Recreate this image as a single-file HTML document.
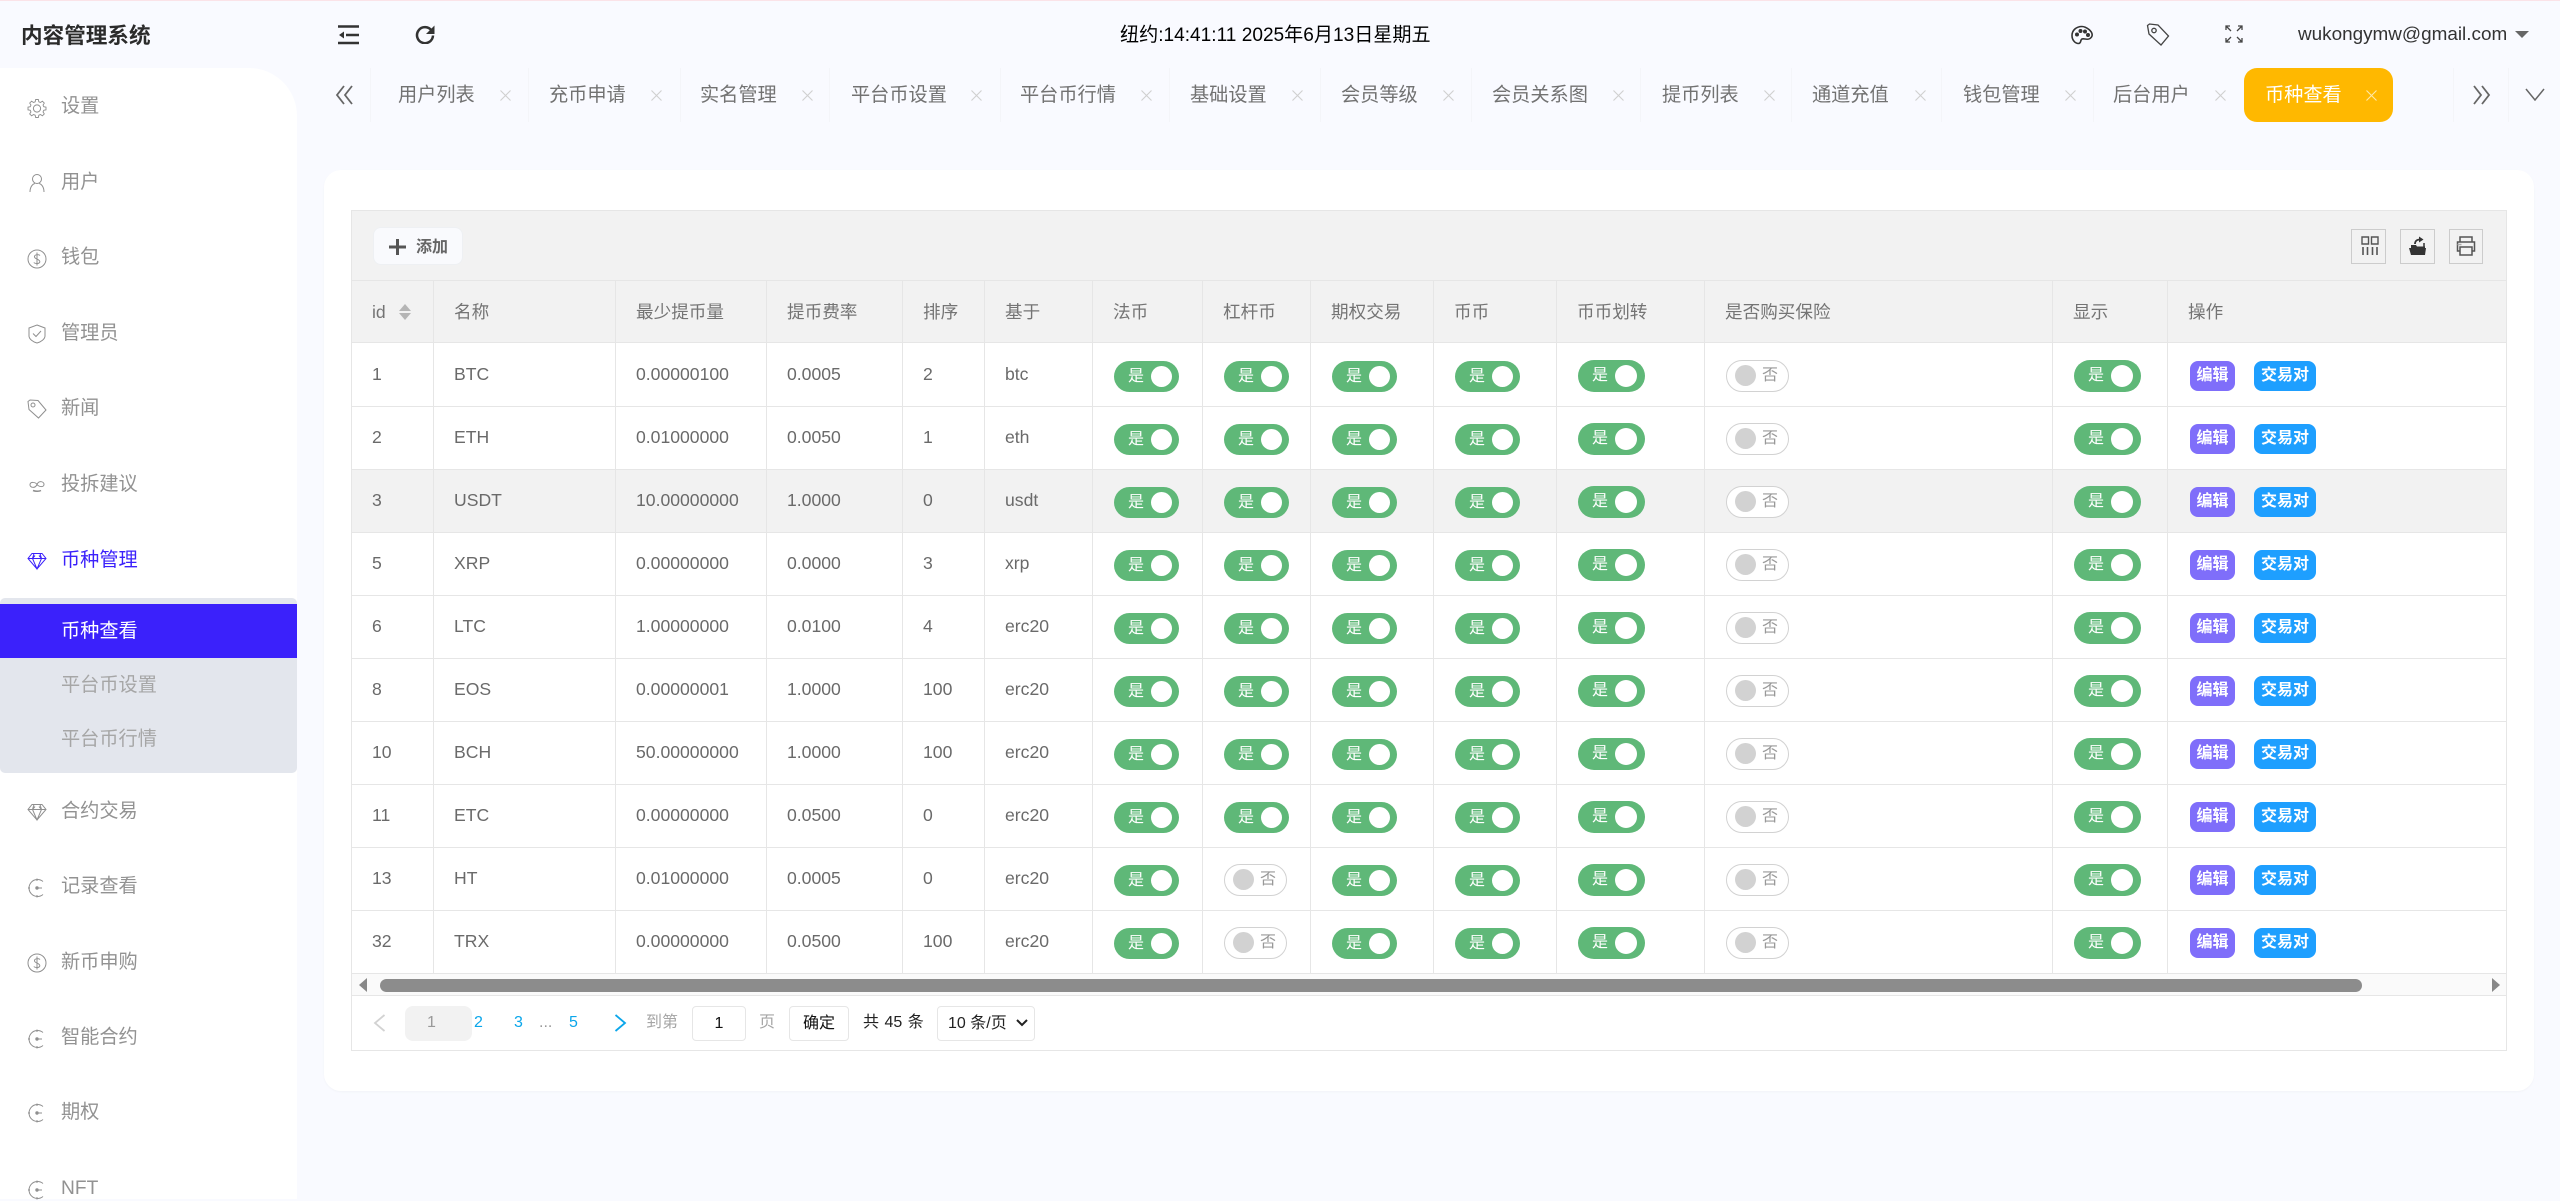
<!DOCTYPE html>
<html lang="zh">
<head>
<meta charset="utf-8">
<title>内容管理系统</title>
<style>
*{box-sizing:border-box}
html,body{margin:0;padding:0}
body{width:2560px;height:1199px;overflow:hidden;position:relative;background:#f9faff;font-family:"Liberation Sans","Noto Sans CJK SC",sans-serif;color:#666}
.a{position:absolute;white-space:nowrap}
.pink{left:0;top:0;width:2560px;height:1px;background:#fbe3e8}
.logo{left:21px;top:22px;font-size:21.6px;line-height:28px;font-weight:700;color:#2b2b2b}
.side{left:0;top:68px;width:297px;height:1131px;background:#fff;border-top-right-radius:48px}
.m{left:61px;font-size:19.2px;line-height:24px;color:#929292}
.mi{left:27px;width:20px;height:20px;fill:none;stroke:#8f8f8f;stroke-width:1}
.sub{left:0;top:598px;width:297px;height:175px;background:#e3e6ed;border-radius:5px}
.act{left:0;top:604px;width:297px;height:54px;background:#3b21fb}
.tab{top:84px;font-size:19.2px;line-height:24px;color:#727272}
.dv{top:68px;width:1px;height:54px;background:#f4f5f9}
.x{top:90px;width:11px;height:11px;stroke:#cfcfcf;stroke-width:1.1;fill:none}
.card{left:324px;top:170px;width:2210px;height:921px;background:#fff;border-radius:17px;box-shadow:0 1px 2px rgba(0,0,0,.03)}
.box{left:351px;top:210px;width:2156px;height:841px;border:1px solid #e6e6e6;background:#fff}
.tb{left:352px;top:211px;width:2154px;height:70px;background:#f2f2f2;border-bottom:1px solid #e6e6e6}
.add{left:373px;top:227px;width:90px;height:38px;background:#f9fafd;border:1px solid #eef0f3;border-radius:8px}
.tool{top:229px;height:35px;border:1px solid #ccc}
table{position:absolute;left:352px;top:281px;width:2154px;border-collapse:separate;border-spacing:0;table-layout:fixed;font-size:17.6px;color:#6a6a6a}
th,td{border-right:1px solid #e6e6e6;border-bottom:1px solid #e6e6e6;padding:0 0 21px 20px;vertical-align:bottom;line-height:22px;text-align:left;font-weight:400;position:relative;white-space:nowrap}
th{height:62px;background:#f2f2f2;padding-bottom:19px;color:#747474}
td{height:63px}
tr.f td{height:64px}
tr.h td{background:#f2f2f2}
th:last-child,td:last-child{border-right:0}
b.p,b.n{position:absolute;left:21px;bottom:14px;height:31px;width:65px;border-radius:16px;font-weight:400;font-size:16px;line-height:31px;color:#fff;background:#5fb878;padding-left:14px}
b.p:after{content:"";position:absolute;left:37px;top:5px;width:21px;height:21px;border-radius:50%;background:#fff}
b.l{width:67px;height:32px;padding-left:14px;line-height:32px}
b.l:after{left:37px;width:22px;height:22px}
b.n{width:63px;height:32px;background:#fff;border:1px solid #d2d2d2;color:#999;padding-left:35px;line-height:30px}
b.n:after{content:"";position:absolute;left:8px;top:4px;width:21px;height:21px;border-radius:50%;background:#d2d2d2}
.e,.j{position:absolute;bottom:15px;height:30px;border-radius:8px;color:#fff;font-size:16px;line-height:29px;font-weight:700;text-align:center}
.e{left:22px;width:45px;background:#7f6efa}
.j{left:86px;width:62px;background:#1e9fff}
.sb{left:352px;top:974px;width:2154px;height:22px;background:#fafafa;border-bottom:1px solid #e6e6e6}
.thumb{left:380px;top:979px;width:1982px;height:13px;background:#8c8c8c;border-radius:7px}
.pg{top:1011px;font-size:16px;line-height:24px}
.inp{top:1006px;height:35px;background:#fff;border:1px solid #e6e6e6;border-radius:4px;color:#111;font-size:16px;line-height:33px;text-align:center}
</style>
</head>
<body>
<svg width="0" height="0" style="position:absolute">
<defs>
<symbol id="x" viewBox="0 0 11 11"><path d="M.5.5l10 10M10.500.5l-10 10"/></symbol>
<symbol id="gear" viewBox="0 0 20 20"><path d="M8.500 1h3l.5 2.500 1.800.8L16 2.900l2.100 2.100-1.400 2.200.8 1.800 2.500.5v3l-2.500.5-.8 1.800 1.400 2.200-2.100 2.100-2.200-1.400-1.800.8-.5 2.500h-3L8 18.500l-1.800-.8L4 19.100 1.900 17l1.400-2.200-.8-1.800L0 12.500v-3L2.500 9l.8-1.800L1.900 5 4 2.900l2.200 1.400L8 3.500z" transform="translate(1 .6) scale(.9)"/><circle cx="10" cy="10.500" r="3.600"/></symbol>
<symbol id="user" viewBox="0 0 20 20"><circle cx="10" cy="6" r="4.500"/><path d="M3 19c0-5 2.500-8 5-8.500M17 19c0-5-2.500-8-5-8.500"/></symbol>
<symbol id="dollar" viewBox="0 0 20 20"><circle cx="10" cy="10" r="9"/><path d="M13 6.500C12 5.500 8 5 7.500 7.500S12.500 10 12.800 12.500 8 15 6.800 13.500M10 3.500v13"/></symbol>
<symbol id="shield" viewBox="0 0 20 20"><path d="M10 1l8 3v8c0 3-4 6-8 7-4-1-8-4-8-7V4z"/><path d="M6 9.500l3 3 5-5.500"/></symbol>
<symbol id="tag" viewBox="0 0 20 20"><path d="M1 2.500L3 1l8 .5 8 9.500-7.500 8L2 10.500z"/><circle cx="6" cy="6" r="2"/></symbol>
<symbol id="inf" viewBox="0 0 20 20"><path d="M10 8.500C8.500 6 3.500 5.500 3 8.500s5 4.500 7 0 7-3 7 0-5 2.500-7 0"/><path d="M6 14.500c2.500 1 6 1 8 0" stroke-width="1.500"/></symbol>
<symbol id="dia" viewBox="0 0 20 20"><path d="M5 2.500h10l4 5L10 18 1 7.500zM1 7.500h18M7 2.500L5.500 7.500 10 18l4.500-10.500L13 2.500M5.500 7.500L8 4.500M14.500 7.500L12 4.500"/></symbol>
<symbol id="tg" viewBox="0 0 20 20"><path d="M16 3.500A8.500 8.500 0 1 0 16 16.500M10 .5v2.500M10 17v2.500M1 10h2"/><circle cx="10" cy="10" r="1.200" fill="#8f8f8f"/><path d="M10 10h5"/></symbol>
</defs>
</svg>

<div class="a pink"></div>
<div class="a logo">内容管理系统</div>

<svg class="a" style="left:338px;top:25px" width="22" height="20" viewBox="0 0 22 20"><path d="M0 1.500h21M8 10h13M0 18h21" stroke="#333" stroke-width="2.600" fill="none"/><path d="M1 10l5-3.500v7z" fill="#333"/></svg>
<svg class="a" style="left:414px;top:24px" width="22" height="20" viewBox="0 0 22 20"><path d="M17.500 6.500A8 8 0 1 0 19 11.500" stroke="#333" stroke-width="2.500" fill="none"/><path d="M20.500 1.500v8.500h-8.500z" fill="#333"/></svg>

<div class="a" style="left:1120px;top:24px;font-size:19.1px;line-height:24px;color:#000">纽约:14:41:11 2025年6月13日星期五</div>

<svg class="a" style="left:2071px;top:25px" width="23" height="20" viewBox="0 0 23 20" fill="none" stroke="#333" stroke-width="1.600"><path d="M11 1.500C5 1.500 1 5.500 1 10.500s3.500 8 6.500 8c3 0 1.500-3.500 3.500-4.500s5 1.500 8-.5c3.500-2.500 2.500-6-1-9C16 3 13.500 1.500 11 1.500z"/><circle cx="6" cy="9.500" r="1.200" fill="#333"/><circle cx="9.500" cy="6" r="1.200" fill="#333"/><circle cx="14" cy="6.500" r="1.200" fill="#333"/><circle cx="17" cy="10" r="1.200" fill="#333"/></svg>
<svg class="a" style="left:2146px;top:23px" width="24" height="23" viewBox="0 0 24 23" fill="none" stroke="#444" stroke-width="1.300"><path d="M1.500 2.500L3.500 1l8.500 1 10.500 11-7.500 9L3 11z"/><circle cx="8" cy="7.500" r="2.200"/></svg>
<svg class="a" style="left:2225px;top:25px" width="18" height="18" viewBox="0 0 18 18" fill="none" stroke="#444" stroke-width="1.300"><path d="M1 5V1h4M1 1l5 5M13 1h4v4M17 1l-5 5M1 13v4h4M1 17l5-5M13 17h4v-4M17 17l-5-5"/></svg>
<div class="a" style="left:2298px;top:23px;font-size:18.9px;line-height:24px;color:#333">wukongymw@gmail.com</div>
<div class="a" style="left:2515px;top:31px;width:0;height:0;border-left:7.500px solid transparent;border-right:7.500px solid transparent;border-top:7.500px solid #666"></div>

<div class="a side"></div>
<svg class="a mi" style="top:98px"><use href="#gear"/></svg><div class="a m" style="top:95px">设置</div>
<svg class="a mi" style="top:173px"><use href="#user"/></svg><div class="a m" style="top:171px">用户</div>
<svg class="a mi" style="top:249px"><use href="#dollar"/></svg><div class="a m" style="top:246px">钱包</div>
<svg class="a mi" style="top:324px"><use href="#shield"/></svg><div class="a m" style="top:322px">管理员</div>
<svg class="a mi" style="top:399px"><use href="#tag"/></svg><div class="a m" style="top:397px">新闻</div>
<svg class="a mi" style="top:476px"><use href="#inf"/></svg><div class="a m" style="top:473px">投拆建议</div>
<svg class="a mi" style="top:551px;stroke:#3b21fb"><use href="#dia"/></svg><div class="a m" style="top:549px;color:#3b21fb">币种管理</div>
<div class="a sub"></div>
<div class="a act"></div>
<div class="a m" style="top:620px;color:#fff">币种查看</div>
<div class="a m" style="top:674px;color:#a6a6a6">平台币设置</div>
<div class="a m" style="top:728px;color:#a6a6a6">平台币行情</div>
<svg class="a mi" style="top:802px"><use href="#dia"/></svg><div class="a m" style="top:800px">合约交易</div>
<svg class="a mi" style="top:878px"><use href="#tg"/></svg><div class="a m" style="top:875px">记录查看</div>
<svg class="a mi" style="top:953px"><use href="#dollar"/></svg><div class="a m" style="top:951px">新币申购</div>
<svg class="a mi" style="top:1029px"><use href="#tg"/></svg><div class="a m" style="top:1026px">智能合约</div>
<svg class="a mi" style="top:1103px"><use href="#tg"/></svg><div class="a m" style="top:1101px">期权</div>
<svg class="a mi" style="top:1180px"><use href="#tg"/></svg><div class="a m" style="top:1177px">NFT</div>

<svg class="a" style="left:335px;top:85px" width="20" height="20" viewBox="0 0 20 20" fill="none" stroke="#666" stroke-width="1.800"><path d="M9 1L2 10l7 9M17 1l-7 9 7 9"/></svg>
<div class="a dv" style="left:370px"></div>
<div class="a tab" style="left:398px">用户列表</div><svg class="a x" style="left:500px"><use href="#x"/></svg>
<div class="a dv" style="left:528px"></div>
<div class="a tab" style="left:549px">充币申请</div><svg class="a x" style="left:651px"><use href="#x"/></svg>
<div class="a dv" style="left:680px"></div>
<div class="a tab" style="left:700px">实名管理</div><svg class="a x" style="left:802px"><use href="#x"/></svg>
<div class="a dv" style="left:829px"></div>
<div class="a tab" style="left:851px">平台币设置</div><svg class="a x" style="left:971px"><use href="#x"/></svg>
<div class="a dv" style="left:1000px"></div>
<div class="a tab" style="left:1020px">平台币行情</div><svg class="a x" style="left:1141px"><use href="#x"/></svg>
<div class="a dv" style="left:1169px"></div>
<div class="a tab" style="left:1190px">基础设置</div><svg class="a x" style="left:1292px"><use href="#x"/></svg>
<div class="a dv" style="left:1320px"></div>
<div class="a tab" style="left:1341px">会员等级</div><svg class="a x" style="left:1443px"><use href="#x"/></svg>
<div class="a dv" style="left:1471px"></div>
<div class="a tab" style="left:1492px">会员关系图</div><svg class="a x" style="left:1613px"><use href="#x"/></svg>
<div class="a dv" style="left:1640px"></div>
<div class="a tab" style="left:1662px">提币列表</div><svg class="a x" style="left:1764px"><use href="#x"/></svg>
<div class="a dv" style="left:1791px"></div>
<div class="a tab" style="left:1812px">通道充值</div><svg class="a x" style="left:1915px"><use href="#x"/></svg>
<div class="a dv" style="left:1941px"></div>
<div class="a tab" style="left:1963px">钱包管理</div><svg class="a x" style="left:2065px"><use href="#x"/></svg>
<div class="a dv" style="left:2093px"></div>
<div class="a tab" style="left:2113px">后台用户</div><svg class="a x" style="left:2215px"><use href="#x"/></svg>
<div class="a" style="left:2244px;top:68px;width:149px;height:54px;background:#ffb800;border-radius:13px"></div>
<div class="a tab" style="left:2265px;color:#fff">币种查看</div><svg class="a x" style="left:2366px;stroke:#ffe9a8"><use href="#x"/></svg>
<div class="a dv" style="left:2453px"></div>
<svg class="a" style="left:2471px;top:85px" width="20" height="20" viewBox="0 0 20 20" fill="none" stroke="#666" stroke-width="1.800"><path d="M3 1l7 9-7 9M11 1l7 9-7 9"/></svg>
<div class="a dv" style="left:2508px"></div>
<svg class="a" style="left:2525px;top:88px" width="20" height="13" viewBox="0 0 20 13" fill="none" stroke="#666" stroke-width="1.500"><path d="M1 1l9 11 9-11"/></svg>

<div class="a card"></div>
<div class="a box"></div>
<div class="a tb"></div>
<div class="a add"></div>
<svg class="a" style="left:389px;top:239px" width="17" height="16" viewBox="0 0 17 16"><path d="M8.500 0v16M0 8h17" stroke="#555" stroke-width="3"/></svg>
<div class="a" style="left:416px;top:236px;font-size:16px;line-height:24px;color:#666;font-weight:700">添加</div>

<div class="a tool" style="left:2351px;width:35px"></div>
<div class="a tool" style="left:2400px;width:35px"></div>
<div class="a tool" style="left:2449px;width:34px"></div>
<svg class="a" style="left:2361px;top:236px" width="18" height="20" viewBox="0 0 18 20" fill="none" stroke="#555" stroke-width="1.400"><path d="M1 1h6.500v7H1zM10.500 1H17v7h-6.500z"/><path d="M2 11v8M6.500 11v8M11.500 11v8M16 11v8" stroke-width="1.600"/></svg>
<svg class="a" style="left:2409px;top:236px" width="18" height="20" viewBox="0 0 18 20"><path d="M0 12h17l-1 7H2z" fill="#333"/><path d="M2 12V9h5l1 1.500h8V12z" fill="#333"/><path d="M6 8c0-3 2-4.500 5-4.500" stroke="#333" stroke-width="1.800" fill="none"/><path d="M10 .5l4.500 3-4.500 3z" fill="#333"/><path d="M15 7v4" stroke="#333" stroke-width="1.500"/></svg>
<svg class="a" style="left:2456px;top:236px" width="20" height="20" viewBox="0 0 20 20" fill="none" stroke="#555" stroke-width="1.500"><path d="M4 6V1h12v5M4 15H1.500V6h17v9H16"/><path d="M4 11h12v8H4z"/><path d="M1.500 8.500h4" stroke="#aaa"/></svg>

<table>
<colgroup><col style="width:82px"><col style="width:182px"><col style="width:151px"><col style="width:136px"><col style="width:82px"><col style="width:108px"><col style="width:110px"><col style="width:108px"><col style="width:123px"><col style="width:123px"><col style="width:148px"><col style="width:348px"><col style="width:115px"><col style="width:338px"></colgroup>
<tr><th>id<span style="position:absolute;left:47px;top:23px;width:0;height:0;border-left:6px solid transparent;border-right:6px solid transparent;border-bottom:7px solid #b5b5b5"></span><span style="position:absolute;left:47px;top:32px;width:0;height:0;border-left:6px solid transparent;border-right:6px solid transparent;border-top:7px solid #b5b5b5"></span></th><th>名称</th><th>最少提币量</th><th>提币费率</th><th>排序</th><th>基于</th><th>法币</th><th>杠杆币</th><th>期权交易</th><th>币币</th><th>币币划转</th><th>是否购买保险</th><th>显示</th><th>操作</th></tr>
<tr class="f"><td>1</td><td>BTC</td><td>0.00000100</td><td>0.0005</td><td>2</td><td>btc</td><td><b class="p">是</b></td><td><b class="p">是</b></td><td><b class="p">是</b></td><td><b class="p">是</b></td><td><b class="p l">是</b></td><td><b class="n">否</b></td><td><b class="p l">是</b></td><td><span class="e">编辑</span><span class="j">交易对</span></td></tr>
<tr><td>2</td><td>ETH</td><td>0.01000000</td><td>0.0050</td><td>1</td><td>eth</td><td><b class="p">是</b></td><td><b class="p">是</b></td><td><b class="p">是</b></td><td><b class="p">是</b></td><td><b class="p l">是</b></td><td><b class="n">否</b></td><td><b class="p l">是</b></td><td><span class="e">编辑</span><span class="j">交易对</span></td></tr>
<tr class="h"><td>3</td><td>USDT</td><td>10.00000000</td><td>1.0000</td><td>0</td><td>usdt</td><td><b class="p">是</b></td><td><b class="p">是</b></td><td><b class="p">是</b></td><td><b class="p">是</b></td><td><b class="p l">是</b></td><td><b class="n">否</b></td><td><b class="p l">是</b></td><td><span class="e">编辑</span><span class="j">交易对</span></td></tr>
<tr><td>5</td><td>XRP</td><td>0.00000000</td><td>0.0000</td><td>3</td><td>xrp</td><td><b class="p">是</b></td><td><b class="p">是</b></td><td><b class="p">是</b></td><td><b class="p">是</b></td><td><b class="p l">是</b></td><td><b class="n">否</b></td><td><b class="p l">是</b></td><td><span class="e">编辑</span><span class="j">交易对</span></td></tr>
<tr><td>6</td><td>LTC</td><td>1.00000000</td><td>0.0100</td><td>4</td><td>erc20</td><td><b class="p">是</b></td><td><b class="p">是</b></td><td><b class="p">是</b></td><td><b class="p">是</b></td><td><b class="p l">是</b></td><td><b class="n">否</b></td><td><b class="p l">是</b></td><td><span class="e">编辑</span><span class="j">交易对</span></td></tr>
<tr><td>8</td><td>EOS</td><td>0.00000001</td><td>1.0000</td><td>100</td><td>erc20</td><td><b class="p">是</b></td><td><b class="p">是</b></td><td><b class="p">是</b></td><td><b class="p">是</b></td><td><b class="p l">是</b></td><td><b class="n">否</b></td><td><b class="p l">是</b></td><td><span class="e">编辑</span><span class="j">交易对</span></td></tr>
<tr><td>10</td><td>BCH</td><td>50.00000000</td><td>1.0000</td><td>100</td><td>erc20</td><td><b class="p">是</b></td><td><b class="p">是</b></td><td><b class="p">是</b></td><td><b class="p">是</b></td><td><b class="p l">是</b></td><td><b class="n">否</b></td><td><b class="p l">是</b></td><td><span class="e">编辑</span><span class="j">交易对</span></td></tr>
<tr><td>11</td><td>ETC</td><td>0.00000000</td><td>0.0500</td><td>0</td><td>erc20</td><td><b class="p">是</b></td><td><b class="p">是</b></td><td><b class="p">是</b></td><td><b class="p">是</b></td><td><b class="p l">是</b></td><td><b class="n">否</b></td><td><b class="p l">是</b></td><td><span class="e">编辑</span><span class="j">交易对</span></td></tr>
<tr><td>13</td><td>HT</td><td>0.01000000</td><td>0.0005</td><td>0</td><td>erc20</td><td><b class="p">是</b></td><td><b class="n">否</b></td><td><b class="p">是</b></td><td><b class="p">是</b></td><td><b class="p l">是</b></td><td><b class="n">否</b></td><td><b class="p l">是</b></td><td><span class="e">编辑</span><span class="j">交易对</span></td></tr>
<tr><td>32</td><td>TRX</td><td>0.00000000</td><td>0.0500</td><td>100</td><td>erc20</td><td><b class="p">是</b></td><td><b class="n">否</b></td><td><b class="p">是</b></td><td><b class="p">是</b></td><td><b class="p l">是</b></td><td><b class="n">否</b></td><td><b class="p l">是</b></td><td><span class="e">编辑</span><span class="j">交易对</span></td></tr>
</table>

<div class="a sb"></div>
<div class="a" style="left:359px;top:978px;width:0;height:0;border-top:7.500px solid transparent;border-bottom:7.500px solid transparent;border-right:8px solid #888"></div>
<div class="a thumb"></div>
<div class="a" style="left:2492px;top:978px;width:0;height:0;border-top:7.500px solid transparent;border-bottom:7.500px solid transparent;border-left:8px solid #888"></div>

<svg class="a" style="left:373px;top:1014px" width="13" height="18" viewBox="0 0 13 18" fill="none" stroke="#d2d2d2" stroke-width="1.800"><path d="M11.500 1L2 9l9.500 8"/></svg>
<div class="a" style="left:405px;top:1006px;width:67px;height:35px;background:#f2f2f2;border-radius:8px"></div>
<div class="a pg" style="left:427px;color:#999">1</div>
<div class="a pg" style="left:474px;color:#0ba6ea">2</div>
<div class="a pg" style="left:514px;color:#0ba6ea">3</div>
<div class="a pg" style="left:539px;color:#999">...</div>
<div class="a pg" style="left:569px;color:#0ba6ea">5</div>
<svg class="a" style="left:614px;top:1014px" width="13" height="18" viewBox="0 0 13 18" fill="none" stroke="#0ba6ea" stroke-width="1.800"><path d="M1.500 1L11 9l-9.500 8"/></svg>
<div class="a pg" style="left:646px;color:#a5a5a5">到第</div>
<div class="a inp" style="left:692px;width:54px">1</div>
<div class="a pg" style="left:759px;color:#a5a5a5">页</div>
<div class="a inp" style="left:789px;width:60px">确定</div>
<div class="a pg" style="left:863px;color:#222;word-spacing:1px">共 45 条</div>
<div class="a inp" style="left:937px;width:98px;text-align:left;padding-left:10px;color:#222">10 条/页</div>
<svg class="a" style="left:1016px;top:1019px" width="12" height="8" viewBox="0 0 12 8" fill="none" stroke="#222" stroke-width="2"><path d="M1 1l5 5 5-5"/></svg>
</body>
</html>
